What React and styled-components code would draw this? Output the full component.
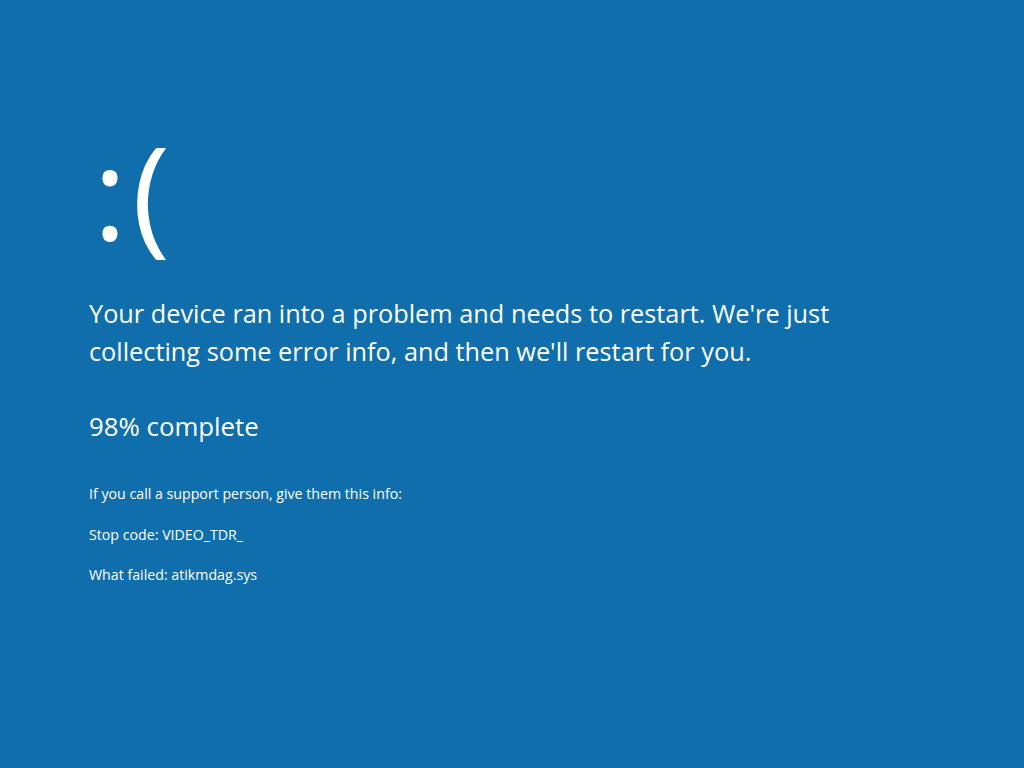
import React from "react";
import styled, { createGlobalStyle } from "styled-components";

const Global = createGlobalStyle`
  html, body { margin: 0; padding: 0; background: #0f6eab; }
  body { font-family: "Open Sans", "Noto Sans", sans-serif; color: #ffffff; }
`;

const Screen = styled.div`
  width: 1024px;
  height: 768px;
  background: #0f6eab;
  box-sizing: border-box;
  padding: 108px 0 0 89px;
  display: flex;
  flex-direction: column;
  overflow: hidden;
`;

const Face = styled.div`
  font-size: 129px;
  line-height: 164px;
  font-weight: 400;
  height: 164px;
  margin-left: 4px;
  letter-spacing: 5px;
`;

const Message = styled.p`
  margin: 22px 0 0 0;
  font-size: 25.3px;
  line-height: 38px;
  width: 800px;
`;

const Progress = styled.p`
  margin: 37px 0 0 0;
  font-size: 25.8px;
  line-height: 38px;
`;

const Info = styled.p`
  margin: ${(p) => p.$gap}px 0 0 0;
  font-size: 14.2px;
  line-height: 20px;
`;

export default function App() {
  return (
    <>
      <Global />
      <Screen>
        <Face>:(</Face>
        <Message>
          Your device ran into a problem and needs to restart. We're just
          collecting some error info, and then we'll restart for you.
        </Message>
        <Progress>98% complete</Progress>
        <Info $gap={39}>If you call a support person, give them this info:</Info>
        <Info $gap={21}>Stop code: VIDEO_TDR_</Info>
        <Info $gap={20}>What failed: atikmdag.sys</Info>
      </Screen>
    </>
  );
}
